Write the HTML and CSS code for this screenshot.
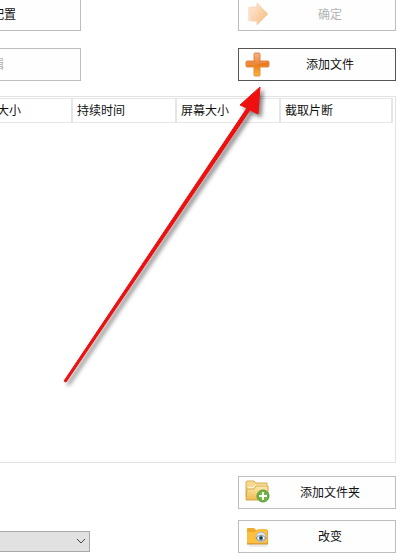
FILE: index.html
```
<!DOCTYPE html>
<html lang="zh-CN">
<head>
  <meta charset="UTF-8">
  <meta name="viewport" content="width=device-width, initial-scale=1.0">
  <title>添加文件</title>
  <link rel="stylesheet" href="styles.css">
</head>
<body>
  <main class="window">

    <!-- Top buttons -->
    <div class="row row-top">
      <button class="btn btn-left btn-config">配置</button>
      <button class="btn" disabled>
        <svg class="icon faded" viewBox="0 0 26 26">
          <defs>
            <linearGradient id="arrow" x1="0" y1="0" x2="1" y2="1">
              <stop offset="0" stop-color="#fde3c6"/>
              <stop offset="1" stop-color="#f39a40"/>
            </linearGradient>
          </defs>
          <path d="M4 6h3v14H4z" fill="#fbd6c0"/>
          <path d="M7 6h6V2l11 11-11 11v-4H7z" fill="url(#arrow)" stroke="#f6c49c"/>
        </svg>
        <span class="label">确定</span>
      </button>
    </div>
    <div class="row">
      <button class="btn btn-left btn-edit" disabled>辑</button>
      <button class="btn active">
        <svg class="icon" viewBox="0 0 26 26">
          <defs>
            <linearGradient id="plus" x1="0" y1="0" x2="0" y2="1">
              <stop offset="0" stop-color="#f3a677"/>
              <stop offset="0.45" stop-color="#e8741d"/>
              <stop offset="1" stop-color="#fbb62c"/>
            </linearGradient>
          </defs>
          <path d="M11 2h4q1 0 1 1v7h8q1 0 1 1v4q0 1-1 1h-8v8q0 1-1 1h-4q-1 0-1-1v-8H3q-1 0-1-1v-4q0-1 1-1h7V3q0-1 1-1z" fill="url(#plus)" stroke="#e58d4c"/>
          <path d="M11 3h4v8h8v1q-7 0-12 2H3v-3h8z" fill="#fff" opacity="0.15"/>
        </svg>
        <span class="label">添加文件</span>
      </button>
    </div>

    <!-- File list -->
    <div class="list">
      <table>
        <thead>
          <tr>
            <th class="col-size">大小</th>
            <th class="col">持续时间</th>
            <th class="col">屏幕大小</th>
            <th>截取片断</th>
          </tr>
        </thead>
      </table>
    </div>

    <!-- Bottom buttons -->
    <div class="row">
      <button class="btn btn-right">
        <svg class="icon" viewBox="0 0 26 26">
          <defs>
            <linearGradient id="folder" x1="0" y1="0" x2="0" y2="1">
              <stop offset="0" stop-color="#fdeaae"/>
              <stop offset="1" stop-color="#eebb50"/>
            </linearGradient>
          </defs>
          <path d="M2 18V3l1-1h7l2 2h11v14z" fill="#f6d98a" stroke="#d9ae5a"/>
          <path d="M4 8h5l2-2h12v4H4z" fill="#fff6d8"/>
          <path d="M2 21l1-11h7l2-3h12v13l-1 1z" fill="url(#folder)" stroke="#d5a547"/>
          <circle cx="19" cy="17" r="6" fill="#6db643" stroke="#559a38"/>
          <path d="M19 13v8M15 17h8" stroke="#fff" stroke-width="2"/>
        </svg>
        <span class="label">添加文件夹</span>
      </button>
    </div>
    <div class="row row-last">
      <select class="path" aria-label="路径"></select>
      <svg class="chevron" viewBox="0 0 10 6"><path d="M1 1l4 4 4-4"/></svg>
      <button class="btn btn-right">
        <svg class="icon" viewBox="0 0 26 26">
          <path d="M3 7V6q0-1 1-1h6l2 2h11q1 0 1 1v13H3z" fill="#f0a92b"/>
          <path d="M3 9h8l3-3h9v15H3z" fill="#fdbf3e"/>
          <path d="M3 21h21" stroke="#b8832f"/>
          <path d="M5 23h18" stroke="#d8d8d8"/>
          <circle cx="17" cy="14" r="5" fill="#dce5e8" stroke="#a9b3b0"/>
          <path d="M12 15q5-5 10 0-5 5-10 0z" fill="#fff" stroke="#8a8d87"/>
          <circle cx="17" cy="15" r="2" fill="#24688f"/>
          <circle cx="17" cy="15" r="1" fill="#122a3c"/>
        </svg>
        <span class="label">改变</span>
      </button>
    </div>

    <!-- Pointer to the add button -->
    <svg class="pointer" viewBox="0 0 210 310">
      <path d="M6 296L189 23L182 20L202 2L200 29L192 25L8 297Z"/>
    </svg>
  </main>
</body>
</html>
```

FILE: styles.css
```
* {
  box-sizing: border-box;
}

body {
  margin: 0;
  background: #fff;
  color: #111;
  font-family: "Noto Sans CJK SC", sans-serif;
  font-size: 12px;
  line-height: 18px;
}

.window {
  position: relative;
  padding-right: 7px;
  overflow: hidden;
}

.row {
  display: flex;
  justify-content: space-between;
  align-items: center;
}

.row-top {
  margin-bottom: 17px;
}

.row-last {
  margin: 11px 0 7px;
}

/* Buttons */
.btn {
  display: flex;
  align-items: center;
  width: 158px;
  height: 33px;
  padding: 0 5px 2px;
  border: 1px solid #bdbdbd;
  background: #fefefe;
  color: #111;
  font: inherit;
}

.btn:disabled {
  color: #b4b4b4;
}

.btn.active {
  border-color: #555;
}

.btn-left {
  justify-content: flex-end;
  width: 101px;
  margin-left: -20px;
}

.btn-config {
  padding-right: 64px;
}

.btn-edit {
  padding-right: 76px;
}

.btn-right {
  margin-left: auto;
}

.row-top .btn {
  height: 31px;
  border-top: none;
}

.icon {
  width: 26px;
  height: 26px;
}

.faded {
  opacity: 0.7;
}

.label {
  flex: 1;
  text-align: center;
}

/* File list */
.list {
  min-height: 367px;
  margin: 15px 0 13px;
  padding: 1px 2px 0 0;
  border: 1px solid #e2e2e2;
  border-left: none;
}

table {
  width: 100%;
  border-collapse: separate;
  border-spacing: 0;
  table-layout: fixed;
}

th {
  height: 25px;
  padding: 0 4px 2px;
  border: solid #e5e5e5;
  border-width: 1px 2px 1px 0;
  font-weight: normal;
  text-align: left;
}

.col-size {
  width: 73px;
  padding-left: 0;
  text-indent: -3px;
}

.col {
  width: 104px;
}

/* Drop-down */
.path {
  width: 90px;
  height: 21px;
  margin-top: 9px;
  border: 1px solid #a8a8a8;
  border-left: none;
  border-radius: 0;
  background: #e1e1e1;
  appearance: none;
}

.chevron {
  width: 10px;
  height: 6px;
  margin: 9px 0 0 -14px;
  fill: none;
  stroke: #444;
  pointer-events: none;
}

/* Red arrow over the list */
.pointer {
  position: absolute;
  left: 58px;
  top: 85px;
  width: 210px;
  height: 310px;
  fill: #ee0f0f;
  stroke: #ee0f0f;
  stroke-linejoin: round;
  filter: drop-shadow(3px 3px 2px rgba(0, 0, 0, 0.5));
  pointer-events: none;
}
```
